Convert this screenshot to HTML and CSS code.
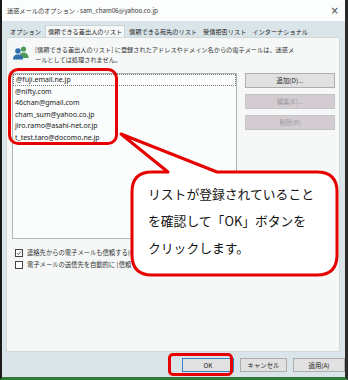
FILE: index.html
```html
<!DOCTYPE html>
<html lang="ja">
<head>
<meta charset="utf-8">
<link rel="stylesheet" href="styles.css">
</head>
<body>
<div class="window">
  <div class="titlebar">
    <span class="title">迷惑メールのオプション - sam_cham06@yahoo.co.jp</span>
    <span class="close">×</span>
  </div>
  <div class="tabs">
    <span class="tab">オプション</span>
    <span class="tab active">信頼できる差出人のリスト</span>
    <span class="tab">信頼できる宛先のリスト</span>
    <span class="tab">受信拒否リスト</span>
    <span class="tab">インターナショナル</span>
  </div>
  <div class="panel">
    <div class="info">
      <svg class="icon" width="16" height="14" viewBox="0 0 16 14">
        <circle cx="10.5" cy="3" r="2.6" fill="#4e9a5a"/>
        <path d="M6.5 12 C6.5 8 8 6.6 10.5 6.6 C13 6.6 15.5 8 15.5 12 Z" fill="#4e9a5a"/>
        <circle cx="5" cy="5" r="2.8" fill="#2f6fb0"/>
        <path d="M0 13.5 C0 10 1.8 8.6 5 8.6 C8.2 8.6 10 10 10 13.5 Z" fill="#2f6fb0"/>
      </svg>
      <p class="info-text">[信頼できる差出人のリスト] に登録されたアドレスやドメイン名からの電子メールは、迷惑メールとしては処理されません。</p>
    </div>
    <div class="listrow">
      <div class="list">
        <div class="item focus">@fuji.email.ne.jp</div>
        <div class="item">@nifty.com</div>
        <div class="item">46chan@gmail.com</div>
        <div class="item">cham_sum@yahoo.co.jp</div>
        <div class="item">jiro.ramo@asahi-net.or.jp</div>
        <div class="item">t_test.taro@docomo.ne.jp</div>
      </div>
      <div class="side">
        <span class="btn">追加(D)...</span>
        <span class="btn disabled">編集(E)...</span>
        <span class="btn disabled">削除(R)</span>
      </div>
    </div>
    <div class="check">
      <span class="box"><svg width="8" height="8" viewBox="0 0 8 8"><path d="M1.2 4.2 L3.2 6.2 L6.8 1.8" fill="none" stroke="#333" stroke-width="1"/></svg></span>
      <span>連絡先からの電子メールも信頼する(C)</span>
    </div>
    <div class="check">
      <span class="box"></span>
      <span>電子メールの送信先を自動的に [信頼できる差出人のリスト] に追加する(E)</span>
    </div>
  </div>
  <div class="footer">
    <span class="btn fbtn default">OK</span>
    <span class="btn fbtn cancel">キャンセル</span>
    <span class="btn fbtn">適用(A)</span>
  </div>
</div>

<div class="hl hl-list"></div>
<div class="hl hl-ok"></div>

<svg class="callout" width="348" height="380" viewBox="0 0 348 380">
  <path d="M152 172 L168 172 L121 134 L217 172 L317 172 Q337 172 337 192 L337 255 Q337 275 317 275 L152 275 Q132 275 132 255 L132 192 Q132 172 152 172 Z" fill="#fff" stroke="#e60000" stroke-width="3" stroke-linejoin="round"/>
</svg>
<div class="callout-text">
  <p>リストが登録されていること</p>
  <p>を確認して「OK」ボタンを</p>
  <p>クリックします。</p>
</div>
</body>
</html>
```

FILE: styles.css
```css
* { box-sizing: border-box; }
html, body {
  margin: 0;
  padding: 0;
}
body {
  width: 348px;
  height: 380px;
  overflow: hidden;
  position: relative;
  font-family: "Noto Sans CJK JP", "Noto Sans", sans-serif;
  color: #222;
}
.window {
  width: 348px;
  height: 380px;
  background: #d9e5e9;
  border-left: 2px solid #1a1a1a;
  border-right: 3px solid #2a2a2a;
  border-bottom: 3px solid #2f7a3a;
  display: flex;
  flex-direction: column;
}
.titlebar {
  height: 21px;
  background: #fcfdfd;
  display: flex;
  align-items: center;
  justify-content: space-between;
  padding: 0 6px 0 5px;
  font-size: 6.2px;
  color: #333;
}
.close {
  font-family: "DejaVu Sans", sans-serif;
  font-size: 10px;
  color: #444;
}
.tabs {
  height: 16px;
  display: flex;
  align-items: flex-end;
  padding-left: 6px;
  font-size: 6.2px;
}
.tab {
  height: 12px;
  display: flex;
  align-items: center;
  padding: 0 2px;
  margin-right: 2px;
}
.active {
  background: #f5f8f7;
  border: 1px solid #c9d3d6;
  border-bottom: none;
  height: 12px;
}
.panel {
  margin: 0 5px 0 4px;
  height: 315px;
  background: #f5f8f7;
  border: 1px solid #d0d9dc;
  padding: 7px 0 0 5px;
  display: flex;
  flex-direction: column;
}
.info {
  display: flex;
  align-items: flex-start;
  gap: 6px;
  padding-left: 1px;
}
.icon { margin-top: 1px; flex: none; }
.info-text {
  margin: 0;
  width: 260px;
  font-size: 6.2px;
  line-height: 10px;
  color: #333;
}
.listrow {
  display: grid;
  grid-template-columns: 225px 90px;
  column-gap: 8px;
  margin-top: 8px;
}
.list {
  height: 166px;
  background: #fbfcfc;
  border: 1px solid #aab6ba;
}
.item {
  font-family: "Noto Sans", sans-serif;
  font-size: 7px;
  height: 11.6px;
  line-height: 11.6px;
  padding-left: 2px;
  color: #222;
}
.focus {
  border: 1px dotted #777;
  line-height: 9.6px;
}
.side {
  display: flex;
  flex-direction: column;
  gap: 6px;
}
.btn {
  height: 15px;
  display: flex;
  align-items: center;
  justify-content: center;
  background: #e1e1e1;
  border: 1px solid #adadad;
  font-size: 6.4px;
  color: #222;
}
.disabled {
  background: #d3ccd3;
  border-color: #c4c4c4;
  color: #9a9a9a;
}
.check {
  display: flex;
  align-items: center;
  gap: 4px;
  margin-top: 3px;
  font-size: 6.3px;
  color: #333;
  white-space: nowrap;
}
.listrow + .check { margin-top: 9px; }
.box {
  width: 8px;
  height: 8px;
  border: 1px solid #444;
  background: #fff;
  display: flex;
  align-items: center;
  justify-content: center;
  margin-left: 3px;
}
.box svg { display: block; }
.footer {
  flex: 1;
  display: flex;
  align-items: flex-start;
  justify-content: flex-end;
  padding: 6px 0 0 0;
  gap: 6px;
}
.fbtn {
  width: 52px;
  height: 14px;
}
.cancel { width: 47px; }
.default {
  border-color: #3b7fc4;
}
.hl {
  position: absolute;
  border: 3px solid #e60000;
}
.hl-list {
  left: 8px;
  top: 68px;
  width: 110px;
  height: 77px;
  border-radius: 10px;
}
.hl-ok {
  left: 168px;
  top: 353px;
  width: 65px;
  height: 23px;
  border-radius: 5px;
}
.callout {
  position: absolute;
  left: 0;
  top: 0;
}
.callout-text {
  position: absolute;
  left: 148px;
  top: 180px;
  font-size: 12.8px;
  line-height: 27px;
  color: #111;
}
.callout-text p {
  margin: 0;
  white-space: nowrap;
}
```
